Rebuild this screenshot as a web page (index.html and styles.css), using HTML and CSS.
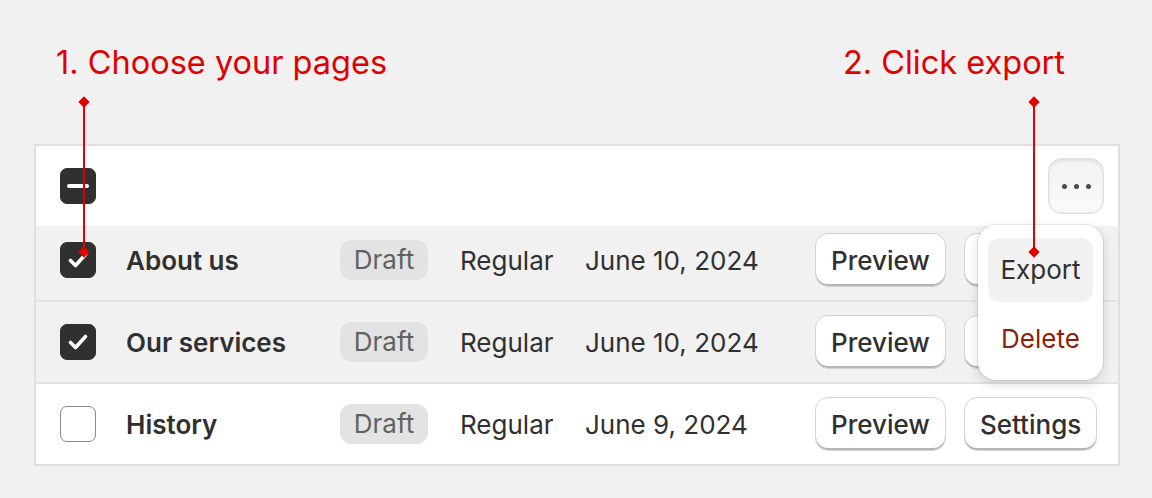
FILE: index.html
```html
<!DOCTYPE html>
<html lang="en">

<head>
    <meta charset="UTF-8">
    <title>Export pages</title>
    <link rel="stylesheet" href="styles.css">
</head>

<body>

    <div class="page">
        <div class="labels">
            <div class="label">1. Choose your pages</div>
            <div class="label">2. Click export</div>
        </div>

        <div class="card">
            <div class="head">
                <span class="check indeterminate"><span class="bar"></span></span>
                <button class="dots" type="button">
                    <span></span><span></span><span></span>
                </button>
            </div>

            <div class="row selected first">
                <span class="check checked">
                    <svg viewBox="0 0 36 36" width="36" height="36"><path d="M10.5 18.5l5 5 10-11" /></svg>
                </span>
                <div class="name">About us</div>
                <div><span class="badge">Draft</span></div>
                <div class="cell">Regular</div>
                <div class="cell">June 10, 2024</div>
                <div class="actions">
                    <button class="btn" type="button">Preview</button>
                    <button class="btn" type="button">Settings</button>
                </div>
            </div>

            <div class="row selected">
                <span class="check checked">
                    <svg viewBox="0 0 36 36" width="36" height="36"><path d="M10.5 18.5l5 5 10-11" /></svg>
                </span>
                <div class="name">Our services</div>
                <div><span class="badge">Draft</span></div>
                <div class="cell">Regular</div>
                <div class="cell">June 10, 2024</div>
                <div class="actions">
                    <button class="btn" type="button">Preview</button>
                    <button class="btn" type="button">Settings</button>
                </div>
            </div>

            <div class="row last">
                <span class="check"></span>
                <div class="name">History</div>
                <div><span class="badge">Draft</span></div>
                <div class="cell">Regular</div>
                <div class="cell">June 9, 2024</div>
                <div class="actions">
                    <button class="btn" type="button">Preview</button>
                    <button class="btn" type="button">Settings</button>
                </div>
            </div>

            <!-- Open actions menu -->
            <div class="menu">
                <div class="menu-item active">Export</div>
                <div class="menu-item danger">Delete</div>
            </div>
        </div>

        <!-- Annotation pointers -->
        <div class="pointer pointer-one"></div>
        <div class="pointer pointer-two"></div>
    </div>

</body>

</html>
```

FILE: styles.css
```css
body {
    margin: 0;
    background-color: #f1f1f1;
    font-family: Inter, "Noto Sans", sans-serif;
    color: #303030;
}

.page {
    position: relative;
    width: 1152px;
    height: 498px;
}

/* Red step labels */
.labels {
    display: flex;
    justify-content: space-between;
    height: 144px;
    padding: 0 87px 0 56px;
    box-sizing: border-box;
}

.label {
    color: #e00000;
    font-size: 32.5px;
    margin-top: 43px;
    line-height: 40px;
}

/* Table card */
.card {
    position: relative;
    margin-left: 34px;
    width: 1086px;
    border: 2px solid #e0e0e0;
    box-sizing: border-box;
    background-color: #fff;
}

.head {
    display: flex;
    justify-content: space-between;
    align-items: center;
    height: 80px;
    padding: 0 14px 0 24px;
}

.row {
    display: grid;
    grid-template-columns: 66px 214px 120px 125px 230px auto;
    align-items: center;
    height: 80px;
    padding: 0 24px;
    border-bottom: 2px solid #e3e3e3;
    font-size: 26px;
}

.row.first {
    height: 68px;
    padding-bottom: 6px;
}

.row.last {
    border-bottom: none;
}

.row.selected {
    background-color: #f1f1f1;
}

/* Checkboxes */
.check {
    display: flex;
    align-items: center;
    justify-content: center;
    width: 36px;
    height: 36px;
    border-radius: 7px;
    border: 1.5px solid #8a8a8a;
    box-sizing: border-box;
    background-color: #fff;
}

.check.checked,
.check.indeterminate {
    background-color: #303030;
    border-color: #303030;
}

.check svg {
    flex: none;
}

.check path {
    fill: none;
    stroke: #fff;
    stroke-width: 3.6;
    stroke-linecap: round;
    stroke-linejoin: round;
}

.check .bar {
    width: 22px;
    height: 4px;
    border-radius: 2px;
    background-color: #fff;
}

.name {
    font-weight: 600;
}

.badge {
    display: inline-block;
    width: 88px;
    height: 40px;
    line-height: 40px;
    text-align: center;
    border-radius: 12px;
    background-color: #e3e3e3;
    color: #616161;
}

.actions {
    display: flex;
    gap: 18px;
}

.btn {
    font-family: inherit;
    font-size: 26px;
    font-weight: 500;
    color: #303030;
    height: 54px;
    padding: 0 15px;
    background-color: #fff;
    border: 1px solid #d4d4d4;
    border-radius: 13px;
    box-shadow: inset 0 -2px 0 #b5b5b5;
}

.dots {
    display: flex;
    align-items: center;
    justify-content: center;
    gap: 7px;
    width: 56px;
    height: 56px;
    padding: 0;
    border-radius: 14px;
    border: 1px solid #dedede;
    background: linear-gradient(#f2f2f2, #fafafa);
    box-shadow: inset 0 2px 3px rgba(0, 0, 0, 0.08), inset 0 -1px 0 #ececec;
}

.dots span {
    width: 5px;
    height: 5px;
    border-radius: 50%;
    background-color: #4a4a4a;
}

/* Dropdown menu */
.menu {
    position: absolute;
    left: 942px;
    top: 79px;
    width: 125px;
    padding: 13px 10px 9px;
    box-sizing: border-box;
    background-color: #fff;
    border-radius: 18px;
    box-shadow: 0 0 0 1px rgba(0, 0, 0, 0.08), 0 4px 12px rgba(0, 0, 0, 0.14);
}

.menu-item {
    height: 64px;
    line-height: 64px;
    text-align: center;
    font-size: 26px;
    border-radius: 12px;
}

.menu-item + .menu-item {
    margin-top: 5px;
}

.menu-item.active {
    background-color: #f1f1f1;
}

.menu-item.danger {
    color: #8e1f0b;
}

/* Annotation lines with diamond ends */
.pointer {
    position: absolute;
    top: 102px;
    width: 2px;
    height: 150px;
    background-color: #e00000;
}

.pointer::before,
.pointer::after {
    content: "";
    position: absolute;
    left: -3px;
    width: 8px;
    height: 8px;
    background-color: #e00000;
    transform: rotate(45deg);
}

.pointer::before {
    top: -4px;
}

.pointer::after {
    bottom: -4px;
}

.pointer-one {
    left: 83px;
}

.pointer-two {
    left: 1033px;
}
```
